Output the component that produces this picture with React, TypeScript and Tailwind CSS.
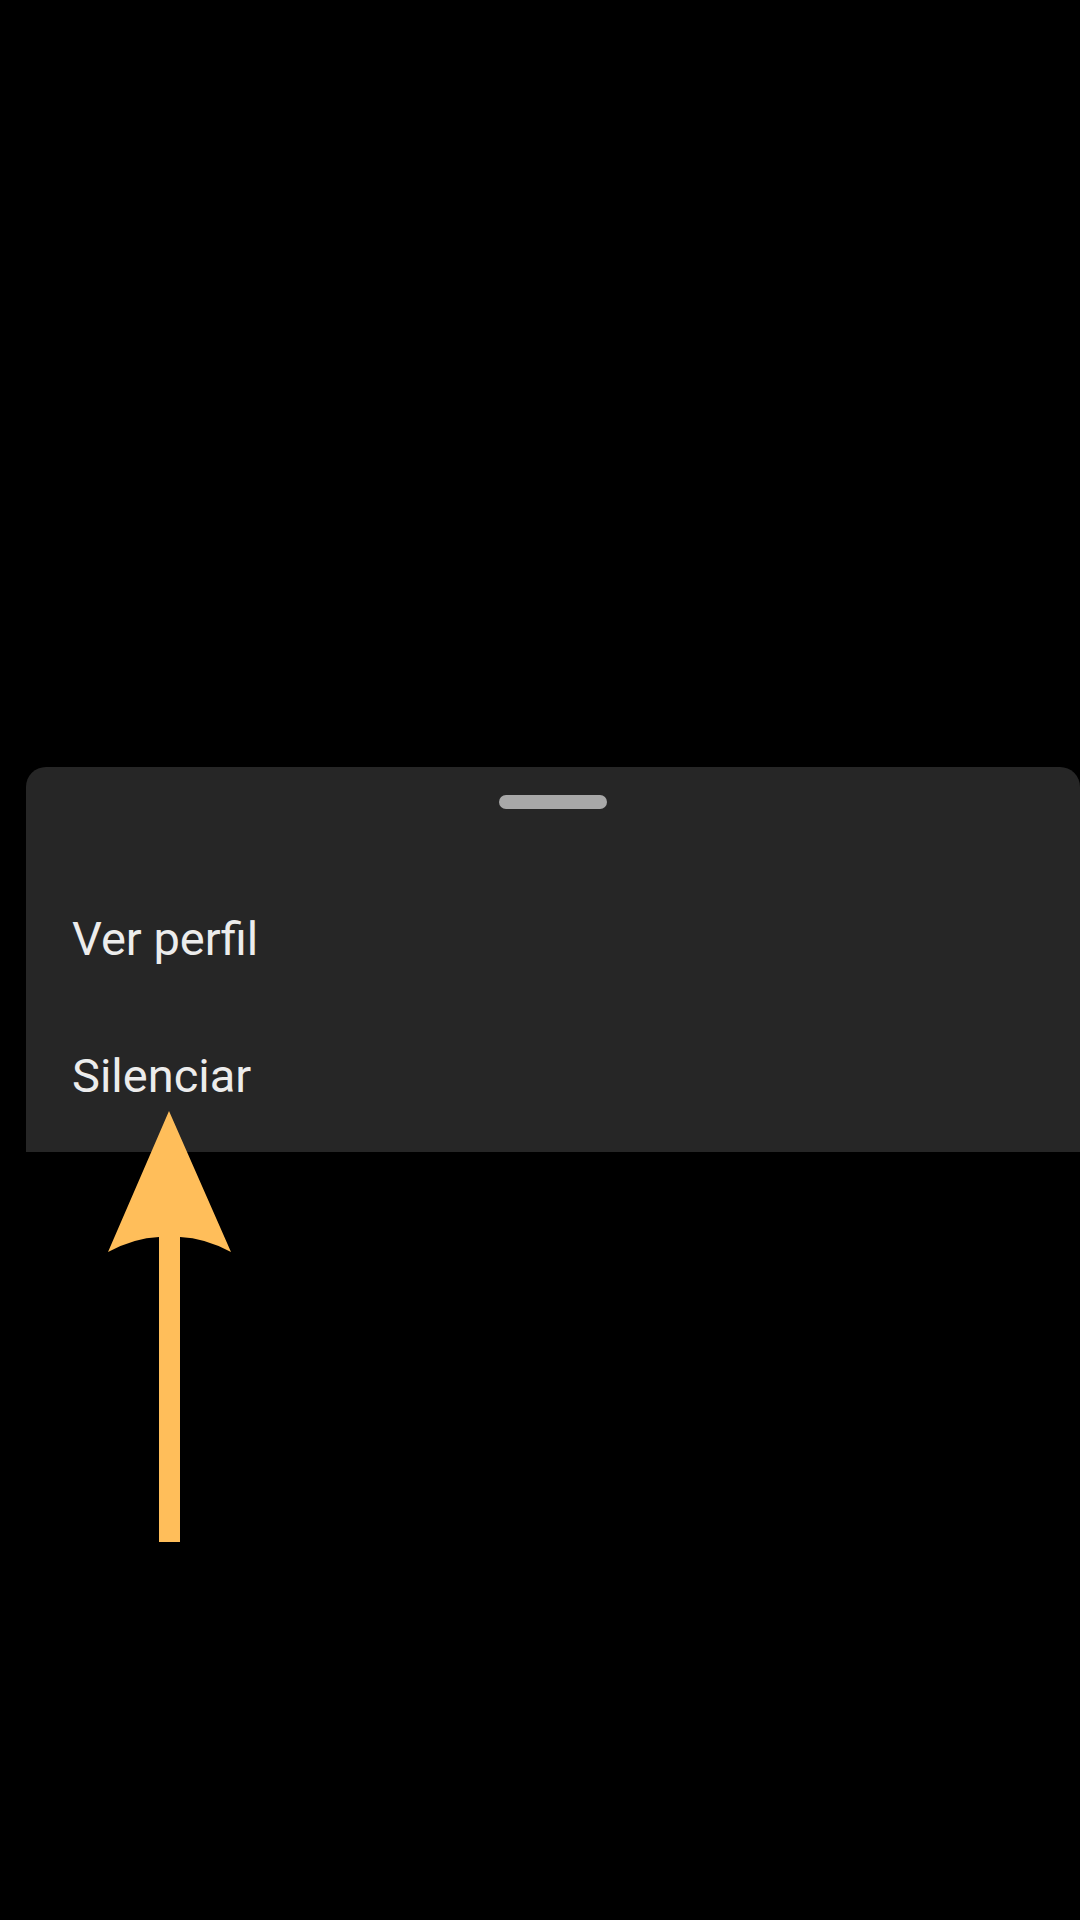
export default function App() {
  return (
    <div className="relative w-[1080px] h-[1920px] bg-black overflow-hidden" style={{ fontFamily: 'Roboto, "Noto Sans", sans-serif' }}>
      <div className="pt-[767px] pl-[26px]">
        <div className="h-[385px] bg-[#262626] rounded-tl-[20px] rounded-tr-[20px] flex flex-col">
          <div className="flex justify-center pt-[28px]">
            <div className="w-[108px] h-[14px] rounded-full bg-[#a8a8a8]" />
          </div>
          <div className="flex flex-col gap-[84px] pt-[103px] pl-[46px] text-[47px] leading-[53px] text-[#ececec]">
            <div>Ver perfil</div>
            <div>Silenciar</div>
          </div>
        </div>
      </div>

      {/* annotation arrow */}
      <svg className="absolute left-[100px] top-[1105px]" width="140" height="445" viewBox="0 0 140 445">
        <path d="M69 6 L131 147 Q105 133 80 132 L80 437 L59 437 L59 132 Q34 133 8 147 Z" fill="#FFBE5A" />
      </svg>
    </div>
  );
}
